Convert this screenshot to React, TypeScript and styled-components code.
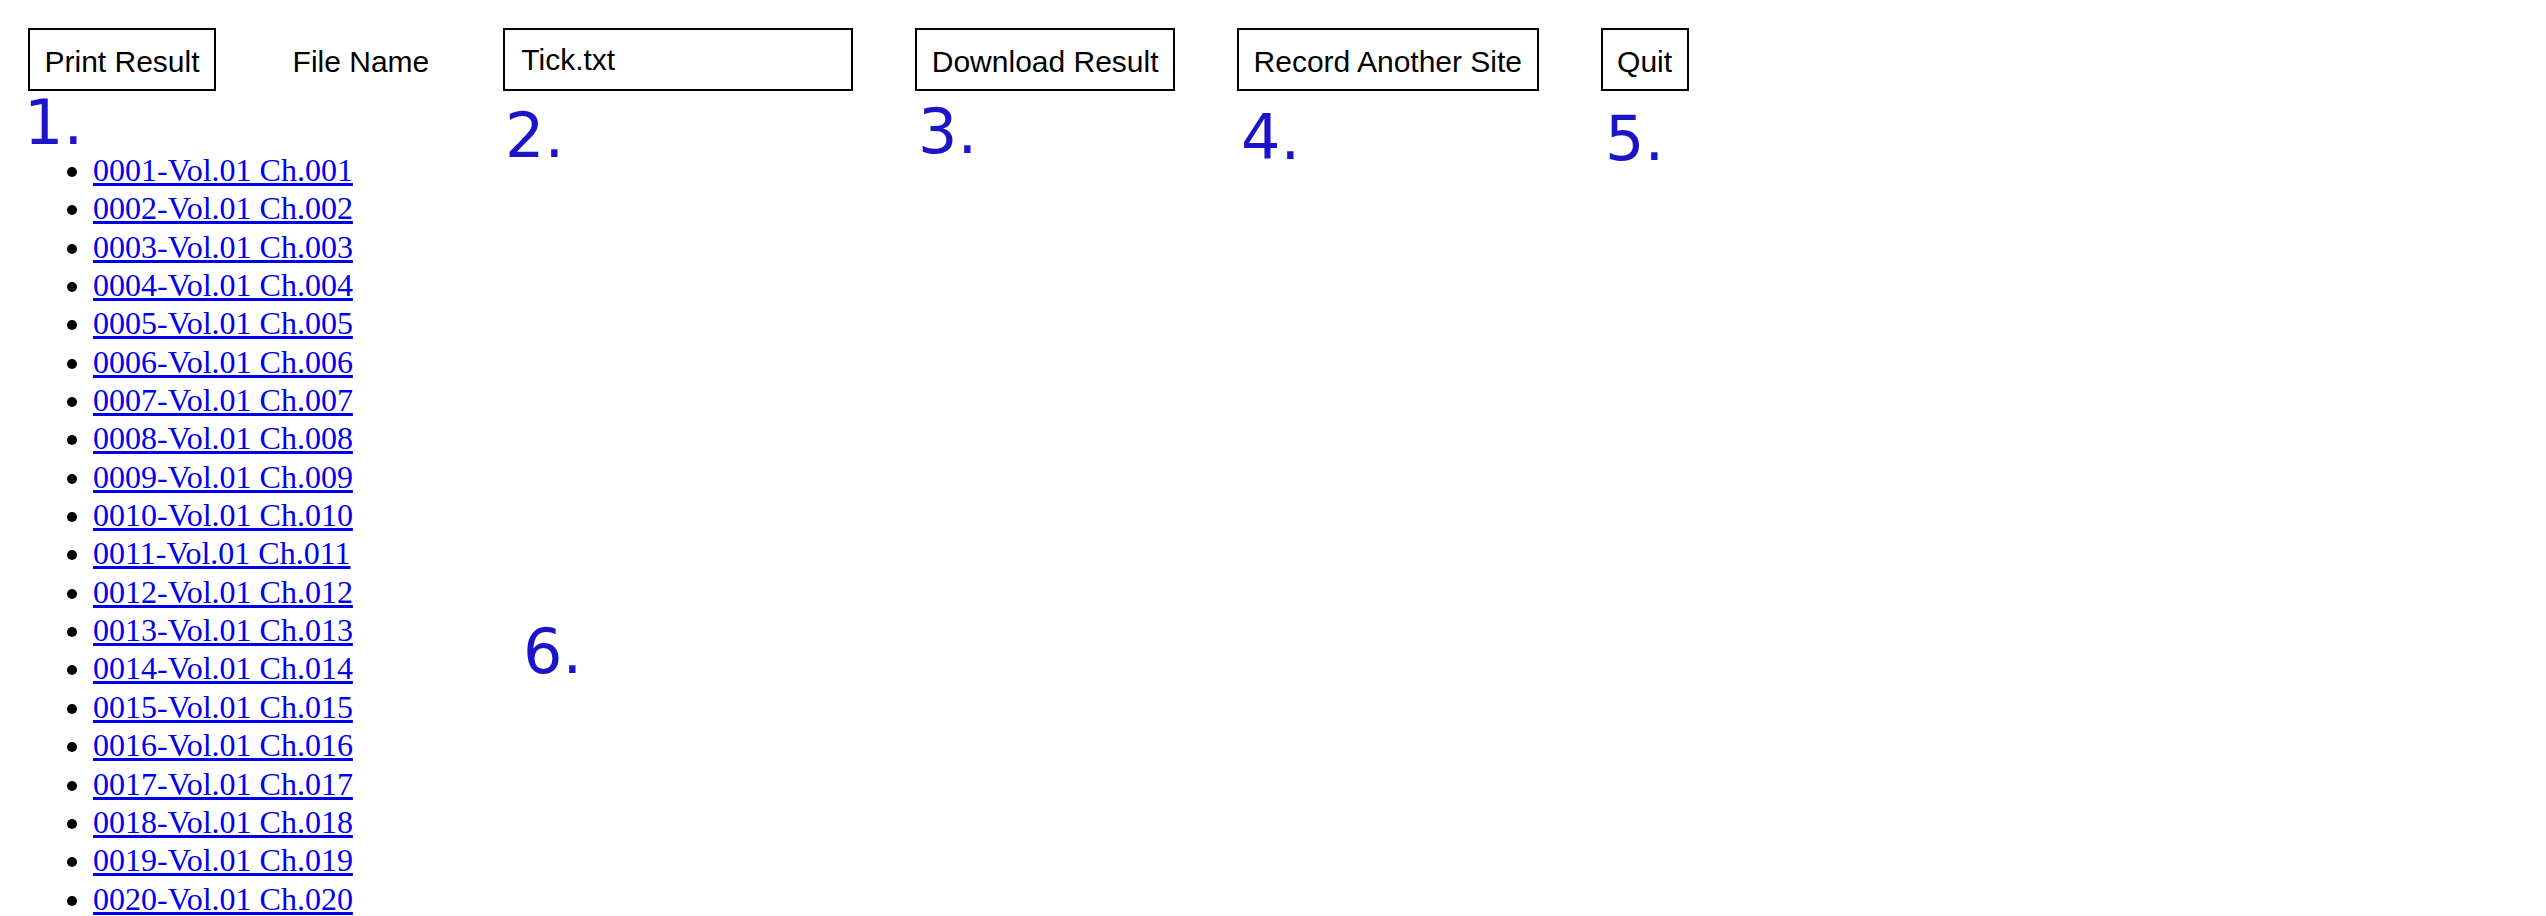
import React from "react";
import styled, { createGlobalStyle } from "styled-components";

const GlobalStyle = createGlobalStyle`
  html, body {
    margin: 0;
    padding: 0;
    background: #ffffff;
  }
  body {
    font-family: "Liberation Sans", Arial, sans-serif;
    color: #000;
  }
`;

const Page = styled.div`
  position: relative;
  width: 2546px;
  height: 916px;
  overflow: hidden;
  background: #ffffff;
`;

const Toolbar = styled.div`
  display: flex;
  align-items: center;
  gap: 62px;
  padding: 28px 0 0 28px;
`;

const ActionButton = styled.button`
  box-sizing: border-box;
  height: 63px;
  padding: 4px 14.5px 0;
  border: 2px solid #000;
  border-radius: 0;
  background: #fff;
  color: #000;
  font-family: "Liberation Sans", Arial, sans-serif;
  font-size: 30px;
  line-height: 1;
  cursor: pointer;
`;

const FieldLabel = styled.label`
  padding: 4px 12px 0 14.5px;
  font-family: "Liberation Sans", Arial, sans-serif;
  font-size: 30px;
  color: #000;
`;

const FileInput = styled.input`
  box-sizing: border-box;
  width: 350px;
  height: 63px;
  padding: 0 16px;
  border: 2px solid #000;
  border-radius: 0;
  outline: none;
  background: #fff;
  color: #000;
  font-family: "Liberation Sans", Arial, sans-serif;
  font-size: 30px;
`;

const ChapterList = styled.ul`
  margin: 60px 0 0 0;
  padding: 0 0 0 93px;
  list-style: disc outside;
  font-family: "Liberation Serif", "Times New Roman", serif;
  font-size: 32px;
  line-height: 38.35px;
`;

const ChapterItem = styled.li`
  margin: 0;
`;

const ChapterLink = styled.a`
  color: #0000ee;
  text-decoration: underline;
`;

const Callout = styled.div<{ $x: number; $y: number }>`
  position: absolute;
  left: ${(p) => p.$x}px;
  top: ${(p) => p.$y}px;
  font-family: "DejaVu Sans", sans-serif;
  font-size: 62px;
  line-height: 1;
  color: #1c14c8;
  pointer-events: none;
`;

const chapters = Array.from({ length: 20 }, (_, i) => {
  const n = String(i + 1).padStart(3, "0");
  return `0${n}-Vol.01 Ch.${n}`;
});

const callouts = [
  { label: "1.", x: 24, y: 92 },
  { label: "2.", x: 505, y: 105 },
  { label: "3.", x: 918, y: 101 },
  { label: "4.", x: 1241, y: 107 },
  { label: "5.", x: 1605, y: 108 },
  { label: "6.", x: 523, y: 621 },
];

export default function App() {
  return (
    <>
      <GlobalStyle />
      <Page>
        <Toolbar>
          <ActionButton type="button">Print Result</ActionButton>
          <FieldLabel htmlFor="file-name">File Name</FieldLabel>
          <FileInput id="file-name" type="text" defaultValue="Tick.txt" />
          <ActionButton type="button">Download Result</ActionButton>
          <ActionButton type="button">Record Another Site</ActionButton>
          <ActionButton type="button">Quit</ActionButton>
        </Toolbar>
        <ChapterList>
          {chapters.map((c) => (
            <ChapterItem key={c}>
              <ChapterLink href="#">{c}</ChapterLink>
            </ChapterItem>
          ))}
        </ChapterList>
        {callouts.map((c) => (
          <Callout key={c.label} $x={c.x} $y={c.y}>
            {c.label}
          </Callout>
        ))}
      </Page>
    </>
  );
}
